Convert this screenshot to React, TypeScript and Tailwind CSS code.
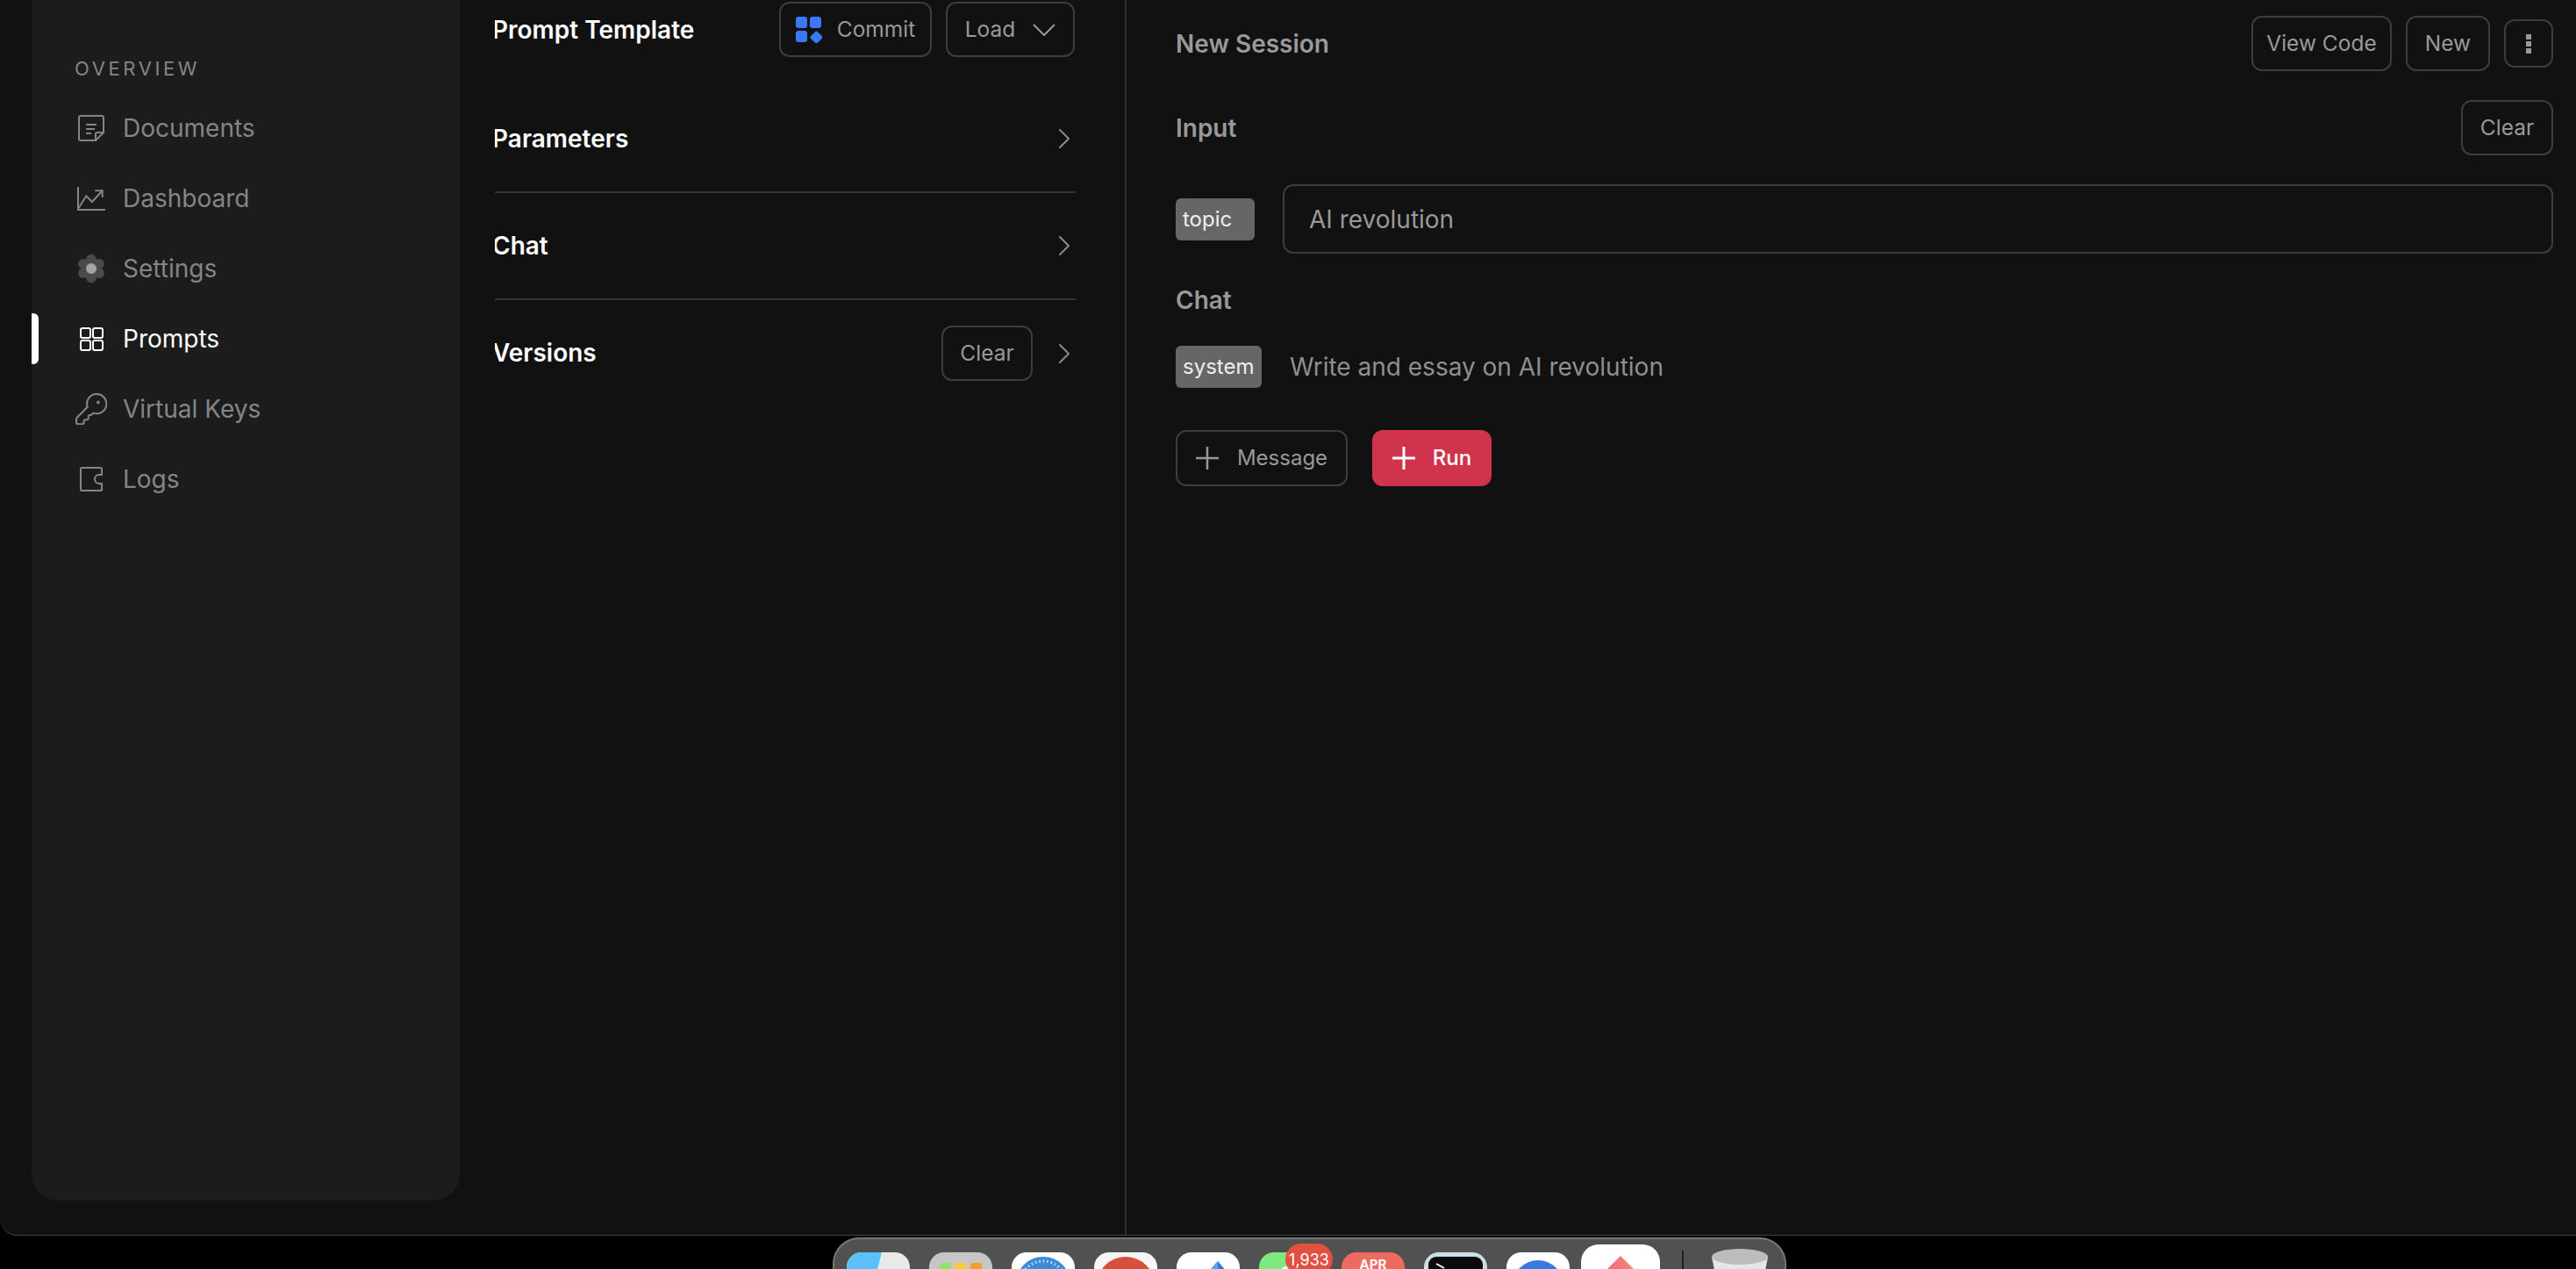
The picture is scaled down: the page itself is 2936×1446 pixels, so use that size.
import React from "react";
import { ChevronRight } from "lucide-react";

const DocumentsIcon = () => (
  <svg viewBox="0 0 36 36" className="h-9 w-9" fill="none" stroke="currentColor" strokeWidth="2">
    <path d="M6 4h24a2 2 0 0 1 2 2v17l-9 9H6a2 2 0 0 1-2-2V6a2 2 0 0 1 2-2z" />
    <path d="M32 23h-7a2 2 0 0 0-2 2v7" />
    <path d="M12 14h12M12 19h10M12 24h6" />
  </svg>
);

const DashboardIcon = () => (
  <svg viewBox="0 0 36 36" className="h-9 w-9" fill="none" stroke="currentColor" strokeWidth="2">
    <path d="M3 5v26h31" />
    <path d="M3 30l9.3-14.7L19 22 30.7 9.3" />
    <path d="M22.3 9.3h8.4V17" />
  </svg>
);

const SettingsIcon = () => (
  <svg viewBox="0 0 36 36" className="h-9 w-9">
    {[-90, -30, 30, 90, 150, 210].map((deg) => (
      <circle
        key={deg}
        cx={18 + 10.5 * Math.cos((deg * Math.PI) / 180)}
        cy={18 + 10.5 * Math.sin((deg * Math.PI) / 180)}
        r="5.8"
        fill="#4a4a4a"
      />
    ))}
    <circle cx="18" cy="18" r="12" fill="#4a4a4a" />
    <circle cx="18" cy="18" r="6" fill="#a3a3a3" />
  </svg>
);

const PromptsIcon = () => (
  <svg viewBox="0 0 36 36" className="h-9 w-9" fill="none" stroke="currentColor" strokeWidth="2">
    <rect x="6" y="6" width="11" height="11" rx="2" />
    <rect x="20" y="6" width="11" height="11" rx="2" />
    <rect x="6" y="20" width="11" height="11" rx="2" />
    <rect x="20" y="20" width="11" height="11" rx="2" />
  </svg>
);

const KeyIcon = () => (
  <svg viewBox="1.4 1.4 21 21" className="h-9 w-9" fill="none" stroke="currentColor" strokeWidth="1.2">
    <path d="M2.586 17.414A2 2 0 0 0 2 18.828V21a1 1 0 0 0 1 1h3a1 1 0 0 0 1-1v-1a1 1 0 0 1 1-1h1a1 1 0 0 0 1-1v-1a1 1 0 0 1 1-1h.172a2 2 0 0 0 1.414-.586l.814-.814a6.5 6.5 0 1 0-4-4z" />
    <circle cx="16.5" cy="7.5" r=".5" fill="currentColor" />
  </svg>
);

const LogsIcon = () => (
  <svg viewBox="0 0 36 36" className="h-9 w-9" fill="none" stroke="currentColor" strokeWidth="2">
    <path d="M7 5h22a1 1 0 0 1 1 1v7h-3a5 5 0 0 0 0 10h3v7a1 1 0 0 1-1 1H7a1 1 0 0 1-1-1V6a1 1 0 0 1 1-1z" />
  </svg>
);

const PlusIcon = ({ weight }: { weight: string }) => (
  <svg viewBox="0 0 26 26" className="h-[26px] w-[26px]" fill="none" stroke="currentColor" strokeWidth={weight}>
    <path d="M13 0v26M0 13h26" />
  </svg>
);

const navItems = [
  { label: "Documents", icon: <DocumentsIcon /> },
  { label: "Dashboard", icon: <DashboardIcon /> },
  { label: "Settings", icon: <SettingsIcon /> },
  { label: "Prompts", icon: <PromptsIcon />, active: true },
  { label: "Virtual Keys", icon: <KeyIcon /> },
  { label: "Logs", icon: <LogsIcon /> },
];

const Sidebar = () => (
  <aside className="ml-9 h-[1368px] w-[488px] shrink-0 rounded-b-[30px] bg-[#1c1c1c] pt-[61px]">
    <div className="ml-[49px] h-[34px] text-[22px] leading-[34px] tracking-[3.6px] text-[#858585]">OVERVIEW</div>
    <nav className="mt-[11px]">
      {navItems.map((item) => (
        <div
          key={item.label}
          className={`relative flex h-20 items-center gap-[18px] pl-[50px] text-[28px] ${
            item.active ? "text-white" : "text-[#858585]"
          }`}
        >
          {item.active && <span className="absolute left-0 top-[11px] h-[58px] w-2 rounded-r-md bg-white" />}
          {item.icon}
          <span>{item.label}</span>
        </div>
      ))}
    </nav>
  </aside>
);

const outlineBtn =
  "flex items-center justify-center rounded-xl border-2 border-[#3d3d3d] text-[24.5px] text-[#999999]";

const CommitIcon = () => (
  <svg viewBox="0 0 30 30" className="h-[30px] w-[30px]" fill="#3b78f5">
    <rect width="13" height="13" rx="3" />
    <rect x="16" width="13" height="13" rx="3" />
    <rect y="16" width="13" height="13" rx="3" />
    <rect x="18" y="18" width="11" height="11" rx="2" transform="rotate(45 23.5 23.5)" />
  </svg>
);

const Chevron = () => <ChevronRight className="-mr-[7px] h-10 w-10 text-[#8a8a8a]" strokeWidth={1.2} />;

const TemplatePanel = () => (
  <section className="ml-10 w-[720px] shrink-0 overflow-hidden border-r-2 border-[#2e2e2e] pr-[56px]">
    <div className="flex h-[98px] items-start justify-between pt-[2px]">
      <h2 className="-ml-[3px] mt-[14px] text-[28px] font-semibold leading-[36px] text-white">Prompt Template</h2>
      <div className="mr-px flex gap-4">
        <button className={`${outlineBtn} h-[63px] w-[174px] gap-[17px]`}>
          <CommitIcon />
          Commit
        </button>
        <button className={`${outlineBtn} h-[63px] w-[147px] gap-[20px]`}>
          Load
          <svg viewBox="0 0 26 14" className="h-[14px] w-[26px]" fill="none" stroke="currentColor" strokeWidth="2">
            <path d="M1 1l12 12L25 1" />
          </svg>
        </button>
      </div>
    </div>
    <div className="flex h-[122px] items-center justify-between border-b-2 border-[#333333]">
      <h2 className="-ml-[3px] text-[28px] font-semibold text-white">Parameters</h2>
      <Chevron />
    </div>
    <div className="flex h-[122px] items-center justify-between border-b-2 border-[#333333]">
      <h2 className="-ml-[3px] text-[28px] font-semibold text-white">Chat</h2>
      <Chevron />
    </div>
    <div className="flex h-[121px] items-center justify-between">
      <h2 className="-ml-[3px] -mt-[2px] text-[28px] font-semibold text-white">Versions</h2>
      <div className="flex items-center gap-4">
        <button className={`${outlineBtn} h-[63px] w-[104px]`}>Clear</button>
        <Chevron />
      </div>
    </div>
  </section>
);

const Badge = ({ label, width }: { label: string; width: string }) => (
  <span className={`flex h-12 ${width} shrink-0 items-center rounded-md bg-[#666666] pl-2 text-[24px] text-[#eeeeee]`}>
    {label}
  </span>
);

const SessionPanel = () => (
  <section className="flex-1 pl-[56px] pr-[26px] pt-[18px]">
    <div className="flex h-[63px] items-center justify-between">
      <h2 className="text-[28px] font-semibold text-[#999999]">New Session</h2>
      <div className="flex items-center gap-4">
        <button className={`${outlineBtn} h-[63px] w-[160px]`}>View Code</button>
        <button className={`${outlineBtn} h-[63px] w-[96px]`}>New</button>
        <button className={`${outlineBtn} h-[55px] w-[56px]`}>
          <svg viewBox="0 0 6 22" className="h-[22px] w-[6px]" fill="#999999">
            <rect width="6" height="6" />
            <rect y="8" width="6" height="6" />
            <rect y="16" width="6" height="6" />
          </svg>
        </button>
      </div>
    </div>
    <div className="mt-[33px] flex h-[63px] items-center justify-between">
      <h3 className="text-[28px] font-semibold text-[#999999]">Input</h3>
      <button className={`${outlineBtn} h-[63px] w-[105px]`}>Clear</button>
    </div>
    <div className="mt-[33px] flex h-[79px] items-center gap-8">
      <Badge label="topic" width="w-[90px]" />
      <input
        readOnly
        value="AI revolution"
        className="h-full min-w-0 flex-1 rounded-xl border-2 border-[#3d3d3d] bg-transparent pl-[28px] text-[28px] text-[#999999] outline-none"
      />
    </div>
    <h3 className="mt-[36px] h-[34px] text-[28px] font-semibold leading-[34px] text-[#999999]">Chat</h3>
    <div className="mt-[35px] flex h-12 items-center gap-8">
      <Badge label="system" width="w-[98px]" />
      <span className="text-[28px] text-[#8f8f8f]">Write and essay on AI revolution</span>
    </div>
    <div className="mt-[48px] flex gap-[28px]">
      <button className="flex h-16 w-[196px] items-center justify-center gap-[21px] rounded-xl border-2 border-[#3d3d3d] text-[24px] text-[#999999]">
        <PlusIcon weight="2.5" />
        Message
      </button>
      <button className="flex h-16 w-[136px] items-center justify-center gap-5 rounded-xl bg-[#d0344d] text-[24px] font-medium text-white">
        <PlusIcon weight="3" />
        Run
      </button>
    </div>
  </section>
);

const DockTile = ({ className, children }: { className: string; children?: React.ReactNode }) => (
  <div className={`relative h-[40px] w-[72px] shrink-0 overflow-hidden rounded-t-[17px] ${className}`}>
    <svg viewBox="0 0 72 40" className="absolute inset-0 h-[40px] w-[72px]">
      {children}
    </svg>
  </div>
);

const Dock = () => (
  <div className="absolute left-[949px] top-[1410px] flex h-[60px] w-[1087px] items-start gap-[22px] rounded-t-[30px] border-2 border-b-0 border-[#767676] bg-[#515151] pl-[14px] pt-[15px]">
    <DockTile className="bg-[#e9e9ea]">
      <polygon points="0,0 40,0 30,40 0,40" fill="#5ac1fb" />
    </DockTile>
    <DockTile className="bg-[#c6c6c6]">
      <rect x="12" y="12" width="13" height="20" rx="3" fill="#8fe36b" />
      <rect x="29" y="12" width="14" height="20" rx="3" fill="#fbc93f" />
      <rect x="47" y="12" width="13" height="20" rx="3" fill="#f49b2f" />
    </DockTile>
    <DockTile className="bg-white">
      <circle cx="36" cy="36" r="31" fill="#3d8ad9" />
      <circle cx="36" cy="36" r="26" fill="none" stroke="#cfe4f7" strokeWidth="3" strokeDasharray="1.5 3" />
    </DockTile>
    <DockTile className="bg-[#f6f6f6]">
      <circle cx="36" cy="38" r="33" fill="#d94f3d" />
    </DockTile>
    <DockTile className="bg-white">
      <polygon points="47,10 64,30 47,40 30,30" fill="#2f7fd8" />
      <polygon points="47,10 30,30 47,40" fill="#5aa0ea" />
    </DockTile>
    <DockTile className="bg-[#7fe87f]">
      <path d="M12 40 Q18 18 36 14 L50 14 L50 40 Z" fill="#ffffff" />
    </DockTile>
    <DockTile className="bg-[#ec6a5e]">
      <text x="36" y="19" textAnchor="middle" fontSize="15" fontWeight="700" fill="#ffffff">
        APR
      </text>
    </DockTile>
    <DockTile className="bg-[#c9dfe6]">
      <rect x="5" y="5" width="62" height="40" rx="9" fill="#0b0b0b" />
      <path d="M14 13l9 5" stroke="#ffffff" strokeWidth="2" fill="none" />
    </DockTile>
    <DockTile className="bg-white">
      <circle cx="36" cy="38" r="29" fill="#3b78e7" />
      <polygon points="36,38 62,20 70,40" fill="#5a8ff0" />
      <polygon points="36,38 7,40 12,22" fill="#d9503f" />
    </DockTile>
    <div className="relative -ml-[9px] -mt-[9px] h-[49px] w-[90px] shrink-0 overflow-hidden rounded-t-[20px] bg-white">
      <svg viewBox="0 0 90 49" className="absolute inset-0 h-[49px] w-[90px]">
        <defs>
          <linearGradient id="dockGem" x1="0" y1="0" x2="1" y2="0">
            <stop offset="0" stopColor="#ec4fa8" />
            <stop offset="1" stopColor="#f9a24d" />
          </linearGradient>
        </defs>
        <polygon points="45,13 85,53 5,53" fill="url(#dockGem)" />
      </svg>
    </div>
    <span className="-mt-[2px] ml-[3px] h-[40px] w-[2px] shrink-0 bg-[#1f1f1f]" />
    <div className="relative -mt-[4px] ml-[10px] h-[40px] w-[64px] shrink-0">
      <svg viewBox="0 0 64 40" className="absolute inset-0 h-[40px] w-[64px]">
        <path d="M0 9 L6 40 H58 L64 9 Z" fill="#e6e6e6" />
        <ellipse cx="32" cy="9" rx="32" ry="9" fill="#bcbcbc" />
      </svg>
    </div>
    <span className="absolute left-[514px] top-[5px] flex h-9 w-[54px] items-center justify-center rounded-full bg-[#e2503f] text-[18px] text-white">
      1,933
    </span>
  </div>
);

export default function App() {
  return (
    <div className="relative h-[1446px] w-[2936px] overflow-hidden bg-black font-[Inter,sans-serif]">
      <main className="flex h-[1408px] rounded-bl-[20px] border-b border-[#444444] bg-[#111111]">
        <Sidebar />
        <TemplatePanel />
        <SessionPanel />
      </main>
      <Dock />
    </div>
  );
}
